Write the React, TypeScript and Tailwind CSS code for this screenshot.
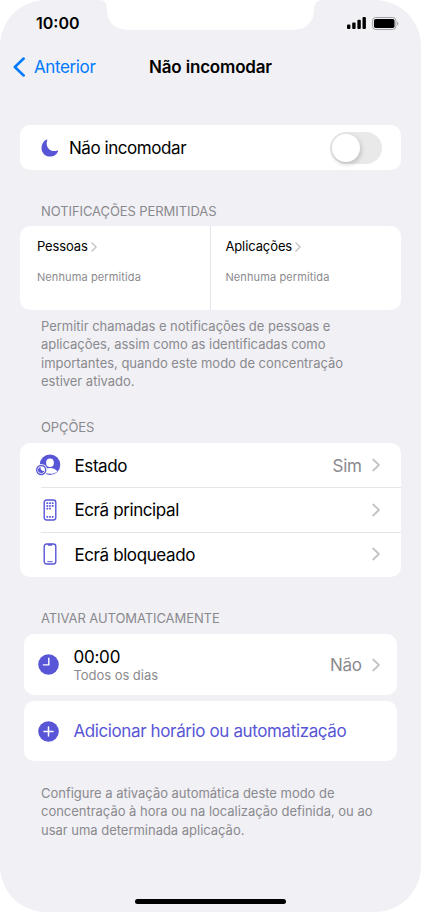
import type { ReactNode } from 'react';

const options = [
  { label: 'Estado', value: 'Sim', icon: <StatusIcon /> },
  { label: 'Ecrã principal', value: '', icon: <HomeScreenIcon /> },
  { label: 'Ecrã bloqueado', value: '', icon: <LockScreenIcon /> },
];

const columns = [
  { label: 'Pessoas', layout: 'w-[190px] pl-[16.500px]' },
  { label: 'Aplicações', layout: 'flex-1 border-l border-[#e5e5e9] pl-[14px]' },
];

function Chevron({ small = false }: { small?: boolean }) {
  return (
    <svg
      viewBox="0 0 8 14"
      className={small ? 'w-[6px] h-[10px]' : 'w-2 h-[14px]'}
      fill="none"
      stroke="#c4c4c6"
      strokeWidth={small ? 2 : 1.8}
      strokeLinecap="round"
      strokeLinejoin="round"
    >
      <path d="M1.200 1.500 6.900 7l-5.700 5.500" />
    </svg>
  );
}

function MoonIcon() {
  return (
    <svg viewBox="0 0 18 18" className="w-[18px] h-[18px]" fill="#5856d6">
      <path d="M5.700.6C6.100.4 6.500.7 6.300 1.200 5.800 2.300 5.600 3.400 5.700 4.700 5.900 9 9 12 13.100 12.100c1.200 0 2.400-.3 3.300-.6.5-.2.9.2.7.7C15.800 15.500 12.800 17.500 9.200 17.500 4.200 17.500.5 13.800.5 8.900.5 5.200 2.500 2 5.700.6Z" />
    </svg>
  );
}

function StatusIcon() {
  return (
    <svg viewBox="0 0 26 22" className="w-[26px] h-[22px]">
      <circle cx="14" cy="10.800" r="10.300" fill="#5856d6" />
      <ellipse cx="14" cy="8.700" rx="3.900" ry="4.300" fill="#fff" />
      <path d="M6.500 17.800c1.300-2.500 4.200-3.700 7.500-3.700s6.100 1.300 7.300 3.300c-1.700 1.500-4.400 2.300-7.300 2.300-2.900 0-5.600-.6-7.500-1.900Z" fill="#fff" />
      <circle cx="5.200" cy="16" r="6.100" fill="#fff" />
      <circle cx="5.200" cy="16" r="4.500" fill="#fff" stroke="#5856d6" strokeWidth="1.400" />
      <path d="M4.500 12.900c-.2 2.900 1.200 4.200 3.800 4.100-.6 1.400-1.700 2-3.100 2-1.900 0-3.200-1.300-3.200-3.100 0-1.400.9-2.600 2.500-3Z" fill="#5856d6" />
    </svg>
  );
}

function HomeScreenIcon() {
  return (
    <svg viewBox="0 0 14 22" className="w-[14px] h-[22px] ml-[2px]" fill="#5856d6">
      <rect x="1.200" y="1" width="11.600" height="20" rx="2.400" fill="none" stroke="#5856d6" strokeWidth="1.400" />
      {[3.300, 6, 8.700].map((y) =>
        [3.400, 6.100, 8.800].map((x) =>
          y > 8 && x > 8 ? null : <rect key={`${x}-${y}`} x={x} y={y} width="1.800" height="1.800" rx="0.400" />,
        ),
      )}
      {[3.400, 6.100, 8.800].map((x) => (
        <rect key={x} x={x} y="16.900" width="1.800" height="1.800" rx="0.400" />
      ))}
    </svg>
  );
}

function LockScreenIcon() {
  return (
    <svg viewBox="0 0 14 22" className="w-[14px] h-[22px] ml-[2px]" fill="none" stroke="#5856d6">
      <rect x="1.200" y="1" width="11.600" height="20" rx="2.400" strokeWidth="1.400" />
      <path d="M4.800 1.800h4.400" strokeWidth="1.800" />
      <path d="M4.700 18.700h4.600" strokeWidth="1" strokeLinecap="round" />
    </svg>
  );
}

function ClockIcon() {
  return (
    <svg viewBox="0 0 21 21" className="w-[21px] h-[21px]">
      <circle cx="10.500" cy="10.500" r="10.300" fill="#5856d6" />
      <path d="M10.800 4.200v6.700H5.400" fill="none" stroke="#fff" strokeWidth="1.400" strokeLinecap="round" strokeLinejoin="round" />
    </svg>
  );
}

function PlusIcon() {
  return (
    <svg viewBox="0 0 21 21" className="w-[21px] h-[21px]">
      <circle cx="10.500" cy="10.500" r="10.300" fill="#5856d6" />
      <path d="M10.500 6v9M6 10.500h9" stroke="#fff" strokeWidth="1.500" strokeLinecap="round" />
    </svg>
  );
}

function SectionLabel({ children }: { children: ReactNode }) {
  return (
    <h2 className="pl-[41px] h-4 leading-4 text-[13px] tracking-[-0.080px] text-[#8a8a8e] whitespace-nowrap">
      {children}
    </h2>
  );
}

function Note({ lines }: { lines: string[] }) {
  return (
    <p className="pl-[41px] text-[13px] leading-[18.300px] tracking-[-0.020px] text-[#8a8a8e] whitespace-nowrap">
      {lines.map((line) => (
        <span key={line} className="block">
          {line}
        </span>
      ))}
    </p>
  );
}

function StatusBar() {
  return (
    <div className="relative h-[46px]">
      <svg viewBox="0 0 421 30" className="absolute left-0 top-0 w-[421px] h-[30px]" fill="#fff">
        <path d="M99 0c6 0 8 3 8 9.500C107 22 115 29.700 127 29.700h167c12 0 20-7.700 20-20.200C314 3 317 0 323 0Z" />
      </svg>
      <div className="relative flex items-center justify-between pl-[36px] pr-[22px] pt-[13px]">
        <span className="text-[16px] leading-5 font-semibold">10:00</span>
        <div className="flex items-center gap-[6px]">
          <svg viewBox="0 0 19 12" className="w-[19px] h-3">
            <rect x="0" y="7.600" width="3.400" height="4.400" rx="1" />
            <rect x="5.200" y="5.400" width="3.400" height="6.600" rx="1" />
            <rect x="10.400" y="2.800" width="3.400" height="9.200" rx="1" />
            <rect x="15.500" y="0" width="3.400" height="12" rx="1" />
          </svg>
          <svg viewBox="0 0 27 13" className="w-[27px] h-[13px]">
            <rect x="0.600" y="0.500" width="23.300" height="12" rx="3.200" fill="none" stroke="#a0a0a3" />
            <rect x="2" y="2" width="20.500" height="9" rx="1.800" />
            <path d="M25.200 4.500c1.600.7 1.600 3.300 0 4Z" fill="#a0a0a3" />
          </svg>
        </div>
      </div>
    </div>
  );
}

export default function App() {
  return (
    <div className="w-[421px] h-[912px] bg-white overflow-hidden font-['Inter',sans-serif] text-black">
      <main className="flex flex-col h-full bg-[#f1f0f5] rounded-[46px] overflow-hidden">
        <StatusBar />

        <header className="grid grid-cols-[1fr_auto_1fr] items-center h-[42px] whitespace-nowrap">
          <a className="flex items-center gap-2 pl-[13px] text-[17px] tracking-[-0.380px] text-[#007aff]">
            <svg viewBox="0 0 13 20" className="w-[13px] h-5" fill="none" stroke="#007aff" strokeWidth="2.500" strokeLinecap="round" strokeLinejoin="round">
              <path d="M10.700 1.500 1.800 10l8.900 8.500" />
            </svg>
            <span className="pt-[2px]">Anterior</span>
          </a>
          <h1 className="pt-[2px] text-[17px] font-semibold tracking-[-0.180px]">Não incomodar</h1>
          <span />
        </header>

        <div className="flex items-center mt-[37px] mx-[20.400px] h-[45px] rounded-[10px] bg-white pl-[20.600px] pr-[18.600px]">
          <MoonIcon />
          <span className="ml-[10px] pt-[3px] flex-1 text-[17px] tracking-[-0.440px]">Não incomodar</span>
          <button className="w-[52px] h-8 rounded-full bg-[#e9e9ea] p-[2px]">
            <span className="block w-7 h-7 rounded-full bg-white shadow-[1px_2px_5px_rgba(0,0,0,0.2)]" />
          </button>
        </div>

        <div className="mt-[33px]">
          <SectionLabel>NOTIFICAÇÕES PERMITIDAS</SectionLabel>
        </div>
        <div className="flex mt-[7px] mx-[20.400px] h-[84.300px] rounded-[10px] bg-white">
          {columns.map((column) => (
            <div key={column.label} className={column.layout}>
              <div className="flex items-center gap-[3px] mt-[11px] h-5 text-[13px] tracking-[-0.100px]">
                {column.label}
                <Chevron small />
              </div>
              <p className="mt-3 text-[11px] leading-4 tracking-[0.120px] text-[#8a8a8e]">Nenhuma permitida</p>
            </div>
          ))}
        </div>
        <div className="mt-[6.900px]">
          <Note
            lines={[
              'Permitir chamadas e notificações de pessoas e',
              'aplicações, assim como as identificadas como',
              'importantes, quando este modo de concentração',
              'estiver ativado.',
            ]}
          />
        </div>

        <div className="mt-[28.800px]">
          <SectionLabel>OPÇÕES</SectionLabel>
        </div>
        <div className="mt-[7.500px] mx-[20.400px] rounded-[10px] bg-white">
          {options.map((option, i) => (
            <div key={option.label} className="relative flex items-center h-[44.700px] pl-[15.600px] pr-[21px] text-[17px]">
              {i > 0 && <span className="absolute left-[20.600px] right-0 top-[-0.500px] h-px bg-[#e5e5e7]" />}
              <span className="flex w-[26px] justify-center">{option.icon}</span>
              <span className="ml-[12.500px] pt-[2.500px] flex-1 tracking-[-0.400px]">{option.label}</span>
              <span className="mr-[10px] pt-[2.500px] tracking-[-0.300px] text-[#8a8a8e]">{option.value}</span>
              <Chevron />
            </div>
          ))}
        </div>

        <div className="mt-[33px]">
          <SectionLabel>ATIVAR AUTOMATICAMENTE</SectionLabel>
        </div>
        <div className="flex items-center mt-[8.300px] mx-[24.400px] h-[61px] shrink-0 rounded-[10px] bg-white pl-[13.600px] pr-[17px]">
          <ClockIcon />
          <div className="ml-[14.400px] pt-px flex-1">
            <p className="text-[17px] leading-5 tracking-[-0.200px]">00:00</p>
            <p className="text-[13px] leading-4 tracking-[-0.030px] text-[#8a8a8e]">Todos os dias</p>
          </div>
          <span className="mr-[10px] pt-[3px] text-[17px] tracking-[-0.300px] text-[#8a8a8e]">Não</span>
          <Chevron />
        </div>
        <div className="flex items-center mt-[6px] mx-[24.400px] h-[60px] shrink-0 rounded-[10px] bg-white pl-[13.600px]">
          <PlusIcon />
          <span className="ml-[14.400px] pt-[2px] text-[17px] tracking-[-0.380px] text-[#5856d6] whitespace-nowrap">
            Adicionar horário ou automatização
          </span>
        </div>
        <div className="mt-[23px]">
          <Note
            lines={[
              'Configure a ativação automática deste modo de',
              'concentração à hora ou na localização definida, ou ao',
              'usar uma determinada aplicação.',
            ]}
          />
        </div>

        <div className="mt-auto mb-[8.500px] mx-auto w-[151px] h-[5px] rounded-full bg-black" />
      </main>
    </div>
  );
}
